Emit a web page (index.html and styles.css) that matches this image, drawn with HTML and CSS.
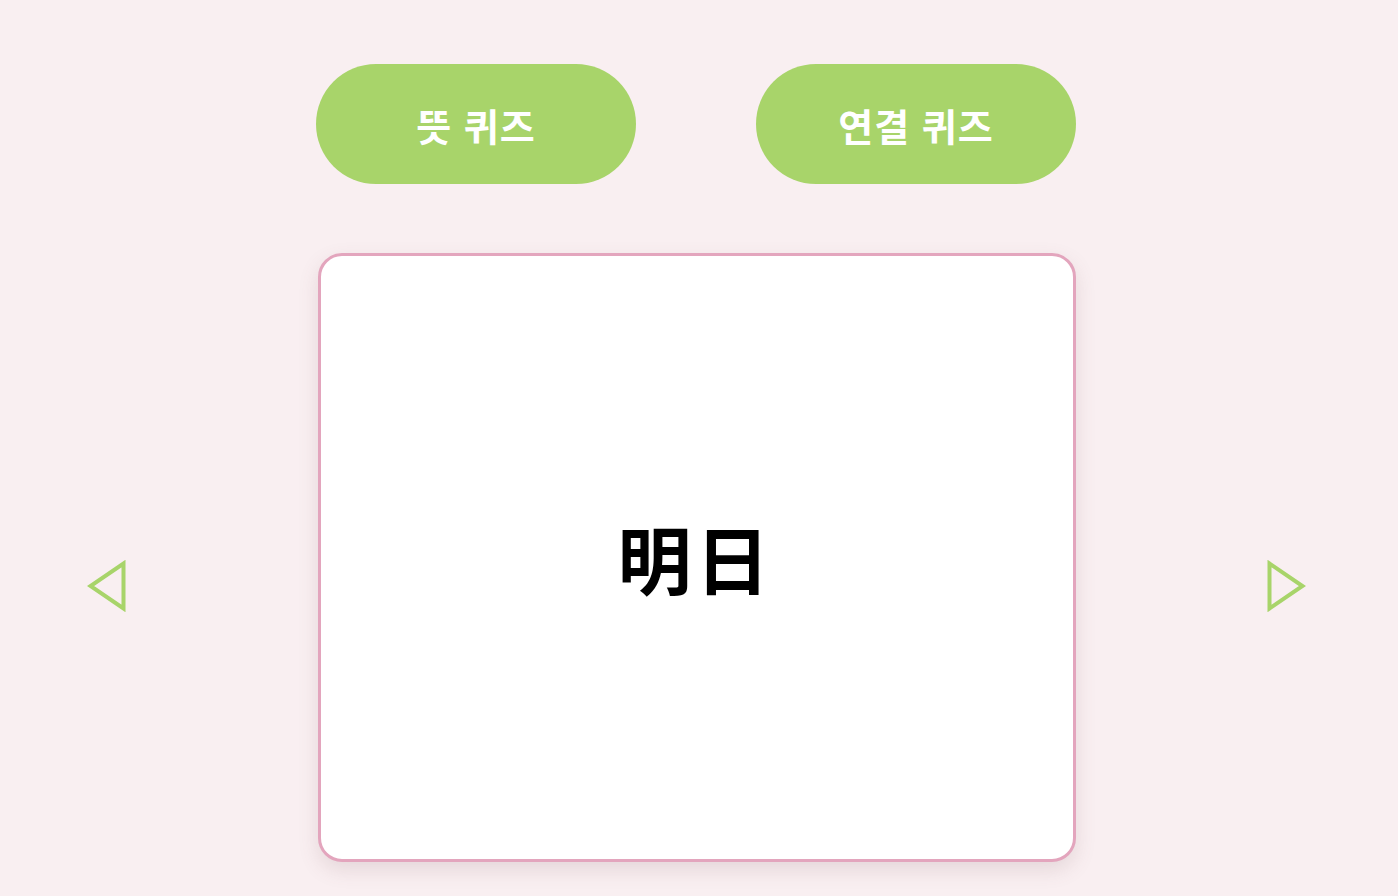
FILE: index.html
```html
<!DOCTYPE html>
<html lang="ko">
<head>
<meta charset="utf-8">
<link rel="stylesheet" href="styles.css">
</head>
<body>
<div class="modes">
  <button class="mode-btn">뜻 퀴즈</button>
  <button class="mode-btn">연결 퀴즈</button>
</div>
<div class="stage">
  <button class="nav prev" aria-label="이전">
    <svg width="40" height="52" viewBox="0 0 40 52"><polygon points="36.5,3.5 36.5,48.5 3.5,26" fill="none" stroke="#a8d46a" stroke-width="4" stroke-linejoin="miter"/></svg>
  </button>
  <div class="card"><span class="word">明日</span></div>
  <button class="nav next" aria-label="다음">
    <svg width="40" height="52" viewBox="0 0 40 52"><polygon points="3.5,3.5 3.5,48.5 36.5,26" fill="none" stroke="#a8d46a" stroke-width="4" stroke-linejoin="miter"/></svg>
  </button>
</div>
</body>
</html>
```
FILE: styles.css
```css
html, body {
  margin: 0;
  padding: 0;
}
body {
  background: #f9eff1;
  font-family: "Noto Sans CJK KR", "Noto Sans", sans-serif;
  height: 896px;
  overflow: hidden;
}
.modes {
  display: flex;
  justify-content: center;
  gap: 120px;
  padding-top: 64px;
  padding-right: 6px;
}
.mode-btn {
  width: 320px;
  height: 120px;
  border: none;
  border-radius: 60px;
  background: #a8d46a;
  color: #fff;
  font-family: "Noto Sans CJK KR", sans-serif;
  font-weight: 700;
  font-size: 38px;
  letter-spacing: 1px;
  cursor: pointer;
  padding: 0;
}
.stage {
  display: flex;
  align-items: center;
  justify-content: space-between;
  padding: 0 92px 0 87px;
  margin-top: 69px;
}
.nav {
  background: none;
  border: none;
  padding: 0;
  margin-top: 56px;
  width: 40px;
  height: 52px;
  display: flex;
  cursor: pointer;
}
.card {
  width: 758px;
  height: 609px;
  box-sizing: border-box;
  border: 3px solid #e3a5bd;
  border-radius: 24px;
  background: #fff;
  box-shadow: 0 8px 20px rgba(120, 80, 90, 0.15);
  display: flex;
  align-items: center;
  justify-content: center;
}
.word {
  font-family: "Noto Sans CJK JP", "Noto Sans CJK KR", sans-serif;
  font-weight: 700;
  font-size: 74px;
  letter-spacing: 4px;
  color: #000;
  margin-top: -2px;
  margin-left: -2px;
}
```
